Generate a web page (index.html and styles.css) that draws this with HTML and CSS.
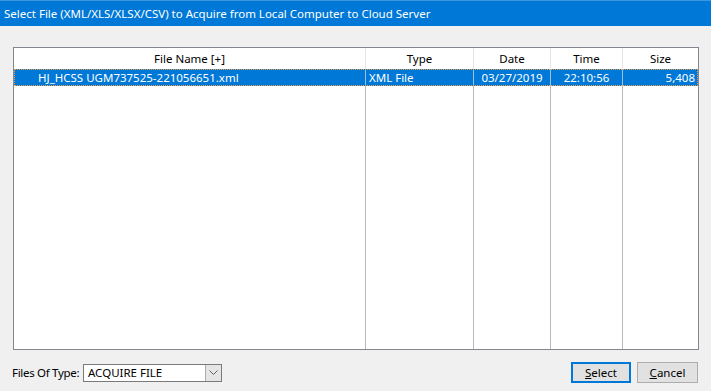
FILE: index.html
```html
<!DOCTYPE html>
<html>
<head>
<meta charset="utf-8">
<link rel="stylesheet" href="styles.css">
</head>
<body>
<div class="window">
  <div class="titlebar">Select File (XML/XLS/XLSX/CSV) to Acquire from Local Computer to Cloud Server</div>
  <div class="content">
    <div class="list">
      <div class="row header">
        <div class="cell c-center">File Name [+]</div>
        <div class="cell c-center">Type</div>
        <div class="cell c-center">Date</div>
        <div class="cell c-center">Time</div>
        <div class="cell c-center">Size</div>
      </div>
      <div class="row item selected">
        <div class="cell c-name">HJ_HCSS UGM737525-221056651.xml</div>
        <div class="cell c-left">XML File</div>
        <div class="cell c-center">03/27/2019</div>
        <div class="cell c-center">22:10:56</div>
        <div class="cell c-right">5,408</div>
      </div>
      <div class="row filler">
        <div class="cell"></div>
        <div class="cell"></div>
        <div class="cell"></div>
        <div class="cell"></div>
        <div class="cell"></div>
      </div>
    </div>
    <div class="footer">
      <div class="filter">
        <span class="label">Files Of Type:</span>
        <div class="combo">
          <span class="combo-text">ACQUIRE FILE</span>
          <span class="combo-btn">
            <svg width="9" height="5" viewBox="0 0 9 5"><path d="M0.5 0.5 L4.5 4.5 L8.5 0.5" fill="none" stroke="#606060" stroke-width="1"/></svg>
          </span>
        </div>
      </div>
      <div class="buttons">
        <button class="btn btn-default"><u>S</u>elect</button>
        <button class="btn"><u>C</u>ancel</button>
      </div>
    </div>
  </div>
</div>
</body>
</html>
```

FILE: styles.css
```css
html, body {
  margin: 0;
  padding: 0;
}
body {
  background: #f0f0f0;
  font-family: "Noto Sans", "Liberation Sans", sans-serif;
  font-size: 11.5px;
  color: #000;
  width: 711px;
  height: 391px;
  overflow: hidden;
}
.titlebar {
  height: 26px;
  line-height: 25px;
  background: #0078d7;
  border-top: 1px solid #3d95dd;
  box-sizing: border-box;
  color: #fff;
  padding-left: 4px;
  font-size: 11.5px;
  white-space: nowrap;
}
.content {
  padding: 21px 12px 0 13px;
}
.list {
  height: 303px;
  box-sizing: border-box;
  border: 1px solid #828790;
  background: #fff;
  display: grid;
  grid-template-columns: 352px 108px 77px 72px 1fr;
  grid-template-rows: 21px 17px 1fr;
}
.row {
  grid-column: 1 / -1;
  display: grid;
  grid-template-columns: subgrid;
}
.cell {
  border-right: 1px solid #b9b9b9;
  white-space: nowrap;
  overflow: hidden;
  display: flex;
  align-items: center;
  padding: 0 3px;
}
.cell:last-child {
  border-right: none;
}
.header .cell {
  border-right-color: #e5e5e5;
  justify-content: center;
}
.c-center { justify-content: center; }
.c-left { justify-content: flex-start; }
.c-right { justify-content: flex-end; }
.c-name { padding-left: 24px; }
.selected {
  background: #0078d7;
  color: #fff;
  outline: 1px dotted #f3a04a;
  outline-offset: -1px;
}
.selected .cell {
  border-right-color: #9dbfe0;
}
.footer {
  display: flex;
  justify-content: space-between;
  align-items: center;
  margin-top: 12px;
  margin-right: 1px;
}
.filter {
  display: flex;
  align-items: center;
  margin-left: -1px;
}
.label {
  width: 71px;
  flex-shrink: 0;
  white-space: nowrap;
  letter-spacing: -0.3px;
}
.combo {
  width: 139px;
  height: 18px;
  flex-shrink: 0;
  box-sizing: border-box;
  border: 1px solid #7a7a7a;
  background: #fff;
  display: flex;
  align-items: center;
  justify-content: space-between;
}
.combo-text {
  padding-left: 4px;
}
.combo-btn {
  width: 16px;
  height: 16px;
  box-sizing: border-box;
  background: #e5e5e5;
  border-left: 1px solid #acacac;
  display: flex;
  align-items: center;
  justify-content: center;
}
.buttons {
  display: flex;
  gap: 6px;
}
.btn {
  font-family: inherit;
  font-size: 11.5px;
  color: #000;
  height: 21px;
  width: 61px;
  box-sizing: border-box;
  background: #e1e1e1;
  border: 1px solid #adadad;
  padding: 0;
  margin: 0;
}
.btn-default {
  width: 60px;
  border: 2px solid #0078d7;
}
```
